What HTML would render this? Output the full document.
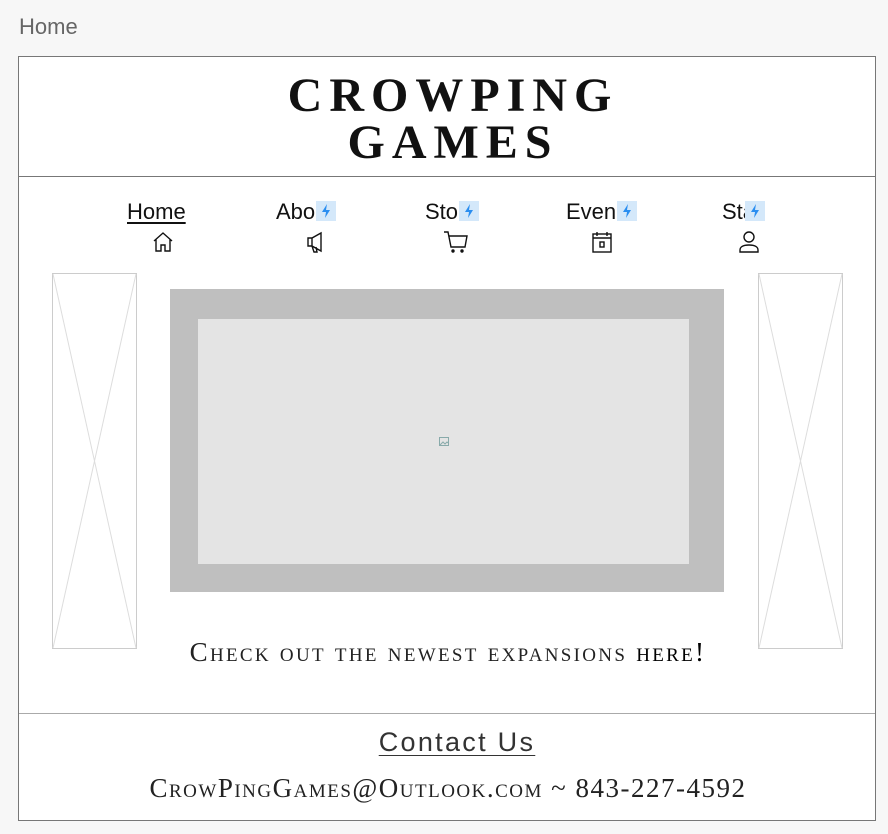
<!DOCTYPE html>
<html><head><style>
body{margin:0;width:888px;height:834px;background:#f7f7f7;position:relative;font-family:"Liberation Sans",sans-serif;overflow:hidden}
.a{position:absolute}
.nav{position:absolute;top:199px;font-size:22px;color:#111;white-space:nowrap}
.bolt{display:inline-block;width:20px;height:20px;background:#d4e8fa;vertical-align:-2px;position:relative;margin-left:1px}
.bolt svg{position:absolute;left:5px;top:3px}
.ico{position:absolute;top:230px}
</style></head><body>
<div class="a" style="left:19px;top:14px;font-size:22px;color:#666">Home</div>
<div class="a" style="left:18px;top:56px;width:856px;height:763px;border:1px solid #777;background:#fff"></div>
<div class="a" style="left:19px;top:176px;width:856px;border-top:1px solid #777"></div>
<div class="a" style="left:19px;top:713px;width:856px;height:106px;border-top:1px solid #aaa"></div>
<div class="a" style="left:153px;top:72px;width:600px;text-align:center;font-family:'Liberation Serif',serif;font-size:48px;line-height:47px;letter-spacing:7px;color:#111;font-weight:bold">CROWPING<br>GAMES</div>

<div class="nav" style="left:127px;text-decoration:underline;text-underline-offset:3px">Home</div>
<div class="nav" style="left:276px">Abo<span class="bolt"><svg width="10" height="14" viewBox="0 0 10 14"><path d="M6 0L1 8h4l-1 6 5-8H5z" fill="#2b8ef0"/></svg></span></div>
<div class="nav" style="left:425px">Sto<span class="bolt"><svg width="10" height="14" viewBox="0 0 10 14"><path d="M6 0L1 8h4l-1 6 5-8H5z" fill="#2b8ef0"/></svg></span></div>
<div class="nav" style="left:566px">Even<span class="bolt"><svg width="10" height="14" viewBox="0 0 10 14"><path d="M6 0L1 8h4l-1 6 5-8H5z" fill="#2b8ef0"/></svg></span></div>
<div class="nav" style="left:722px">Sta<span class="bolt" style="margin-left:-10px"><svg width="10" height="14" viewBox="0 0 10 14"><path d="M6 0L1 8h4l-1 6 5-8H5z" fill="#2b8ef0"/></svg></span></div>

<svg class="ico" style="left:151px" width="24" height="24" viewBox="0 0 24 24" fill="none" stroke="#111" stroke-width="1.4"><path d="M3 11L12 3l9 8M5 9v12h5v-6h4v6h5V9"/></svg>
<svg class="ico" style="left:304px" width="24" height="24" viewBox="0 0 24 24" fill="none" stroke="#111" stroke-width="1.4"><path d="M4 8h4l9-5v18l-9-5H4zM8 8v8M8 16l2 6h3l-1-5"/></svg>
<svg class="ico" style="left:443px" width="26" height="24" viewBox="0 0 26 24" fill="none" stroke="#111" stroke-width="1.4"><path d="M1 2h4l3 15h14l2-11H6"/><circle cx="10" cy="21" r="1" fill="#111"/><circle cx="19" cy="21" r="1" fill="#111"/></svg>
<svg class="ico" style="left:590px" width="24" height="24" viewBox="0 0 24 24" fill="none" stroke="#111" stroke-width="1.4"><rect x="3" y="4" width="18" height="18"/><path d="M3 8h18M7 2v4M17 2v4"/><rect x="10" y="12" width="4" height="5"/></svg>
<svg class="ico" style="left:737px" width="24" height="24" viewBox="0 0 24 24" fill="none" stroke="#111" stroke-width="1.4"><circle cx="12" cy="7" r="5"/><path d="M3 22v-2c0-3 3-5 9-5s9 2 9 5v2z"/></svg>

<svg class="a" style="left:52px;top:273px" width="86" height="377"><rect x=".5" y=".5" width="84" height="375" fill="#fff" stroke="#ccc"/><path d="M1 1L84 375M84 1L1 375" stroke="#ddd"/></svg>
<svg class="a" style="left:758px;top:273px" width="86" height="377"><rect x=".5" y=".5" width="84" height="375" fill="#fff" stroke="#ccc"/><path d="M1 1L84 375M84 1L1 375" stroke="#ddd"/></svg>

<div class="a" style="left:170px;top:289px;width:554px;height:303px;background:#bfbfbf"></div>
<div class="a" style="left:198px;top:319px;width:491px;height:245px;background:#e4e4e4"></div>
<svg class="a" style="left:439px;top:437px" width="10" height="9"><rect x=".5" y=".5" width="9" height="8" fill="none" stroke="#8aa"/><path d="M1 8l3-3 2 2 2-2 1 1" stroke="#8aa" fill="none"/></svg>

<div class="a" style="left:50px;top:637px;width:796px;text-align:center;font-family:'Liberation Serif',serif;font-size:27px;color:#222;letter-spacing:2.3px;font-variant:small-caps;white-space:nowrap">Check out the newest expansions <span style="color:#000">here!</span></div>
<div class="a" style="left:210px;top:727px;width:494px;text-align:center;font-size:27px;font-weight:300;color:#333;letter-spacing:2.3px;text-decoration:underline;text-underline-offset:4px;text-decoration-thickness:1px">Contact Us</div>
<div class="a" style="left:50px;top:773px;width:796px;text-align:center;font-family:'Liberation Serif',serif;font-size:27px;color:#222;letter-spacing:1.5px;font-variant:small-caps;white-space:nowrap">CrowPingGames@Outlook.com ~ 843-227-4592</div>
</body></html>
